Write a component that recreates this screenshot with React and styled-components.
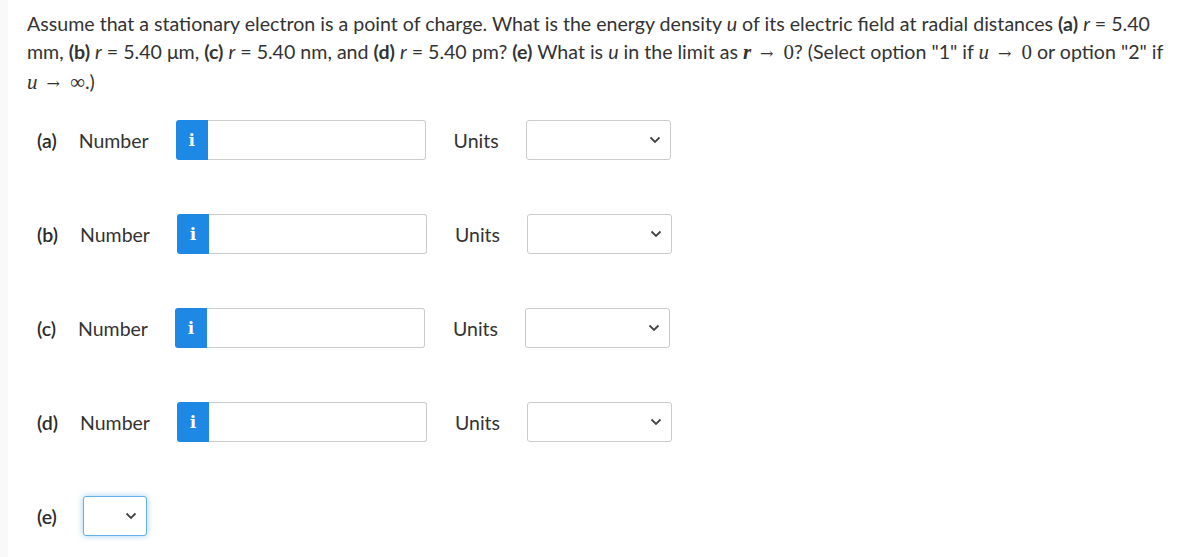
import React from 'react';
import styled, { createGlobalStyle } from 'styled-components';

const rows = [
  { key: 'a', label: '(a)' },
  { key: 'b', label: '(b)' },
  { key: 'c', label: '(c)' },
  { key: 'd', label: '(d)' },
];

const GlobalStyle = createGlobalStyle`
  html, body {
    margin: 0;
    padding: 0;
    background: #f9f9f9;
  }
  body {
    font-family: Lato, "Liberation Sans", sans-serif;
    color: #333;
  }
`;

const Chevron = () => (
  <svg width="12" height="8" viewBox="0 0 12 8">
    <path d="M1.5 1.5 L6 6 L10.5 1.5" fill="none" stroke="#444" strokeWidth="1.8" />
  </svg>
);

const App = () => {
  return (
    <Page>
      <GlobalStyle />
      <Question>
        Assume that a stationary electron is a point of charge. What is the energy density <i>u</i> of
        its electric field at radial distances <b>(a)</b> <i>r</i> = 5.40 mm, <b>(b)</b> <i>r</i> = 5.40 μm,{' '}
        <b>(c)</b> <i>r</i> = 5.40 nm, and <b>(d)</b> <i>r</i> = 5.40 pm? <b>(e)</b> What is <i>u</i> in the
        limit as <MathBold>r</MathBold><Arrow>→</Arrow><Math>0</Math>? (Select option "1" if{' '}
        <MathItalic>u</MathItalic><Arrow>→</Arrow><Math>0</Math> or option "2" if{' '}
        <NoWrap>
          <MathItalic>u</MathItalic><Arrow>→</Arrow><Math>∞</Math>.)
        </NoWrap>
      </Question>

      <Rows>
        {rows.map((row) => (
          <Row key={row.key}>
            <PartLabel>{row.label}</PartLabel>
            <FieldLabel>Number</FieldLabel>
            <InputGroup>
              <InfoButton>i</InfoButton>
              <NumberInput type="text" />
            </InputGroup>
            <UnitsLabel>Units</UnitsLabel>
            <Select $width={145}>
              <Chevron />
            </Select>
          </Row>
        ))}
        <Row>
          <PartLabel>(e)</PartLabel>
          <Select $width={64} $focused $offset={4}>
            <Chevron />
          </Select>
        </Row>
      </Rows>
    </Page>
  );
};

const Page = styled.div`
  margin-left: 8px;
  min-height: 557px;
  background: #fff;
  padding: 10px 19px 0 19px;
  box-sizing: border-box;
`;

const Question = styled.p`
  margin: 0;
  font-size: 19.6px;
  line-height: 28px;
  color: #333;

  b {
    font-weight: 700;
  }
`;

const NoWrap = styled.span`
  white-space: nowrap;
`;

const Math = styled.span`
  font-family: "Liberation Serif", "Times New Roman", serif;
  font-size: 21px;
`;

const MathItalic = styled(Math)`
  font-style: italic;
`;

const MathBold = styled(Math)`
  font-style: italic;
  font-weight: 700;
`;

const Arrow = styled.span`
  font-family: "DejaVu Serif", serif;
  font-size: 16px;
  margin: 0 10px 0 9px;
`;

const Rows = styled.div`
  display: flex;
  flex-direction: column;
  gap: 54px;
  margin-top: 22px;
  padding-left: 10px;
`;

const Row = styled.div`
  display: flex;
  align-items: center;
  height: 40px;
`;

const PartLabel = styled.span`
  font-size: 19.5px;
  font-weight: 600;
  color: #2b2b2b;
  margin-right: 22px;
`;

const FieldLabel = styled.span`
  font-size: 19.5px;
  color: #333;
  margin-right: 27px;
`;

const InputGroup = styled.div`
  display: flex;
  height: 40px;
`;

const InfoButton = styled.div`
  width: 32px;
  height: 40px;
  box-sizing: border-box;
  background: #1e88e5;
  border-radius: 3px 0 0 3px;
  color: #fff;
  display: flex;
  align-items: center;
  justify-content: center;
  font-family: "DejaVu Serif", serif;
  font-weight: 700;
  font-size: 17px;
`;

const NumberInput = styled.input`
  width: 218px;
  height: 40px;
  box-sizing: border-box;
  border: 1px solid #ccc;
  border-left: none;
  border-radius: 0 3px 3px 0;
  outline: none;
  font-family: inherit;
  font-size: 16px;
`;

const UnitsLabel = styled.span`
  font-size: 19.5px;
  color: #333;
  margin-left: 28px;
  margin-right: 27px;
`;

const Select = styled.div`
  width: ${(p) => p.$width}px;
  height: 40px;
  box-sizing: border-box;
  margin-left: ${(p) => p.$offset || 0}px;
  border: 1px solid ${(p) => (p.$focused ? '#66afe9' : '#ccc')};
  border-radius: 3px;
  background: #fff;
  display: flex;
  align-items: center;
  justify-content: flex-end;
  padding-right: 9px;
  box-shadow: ${(p) => (p.$focused ? '0 0 6px rgba(102, 175, 233, 0.6)' : 'none')};
`;

export default App;
